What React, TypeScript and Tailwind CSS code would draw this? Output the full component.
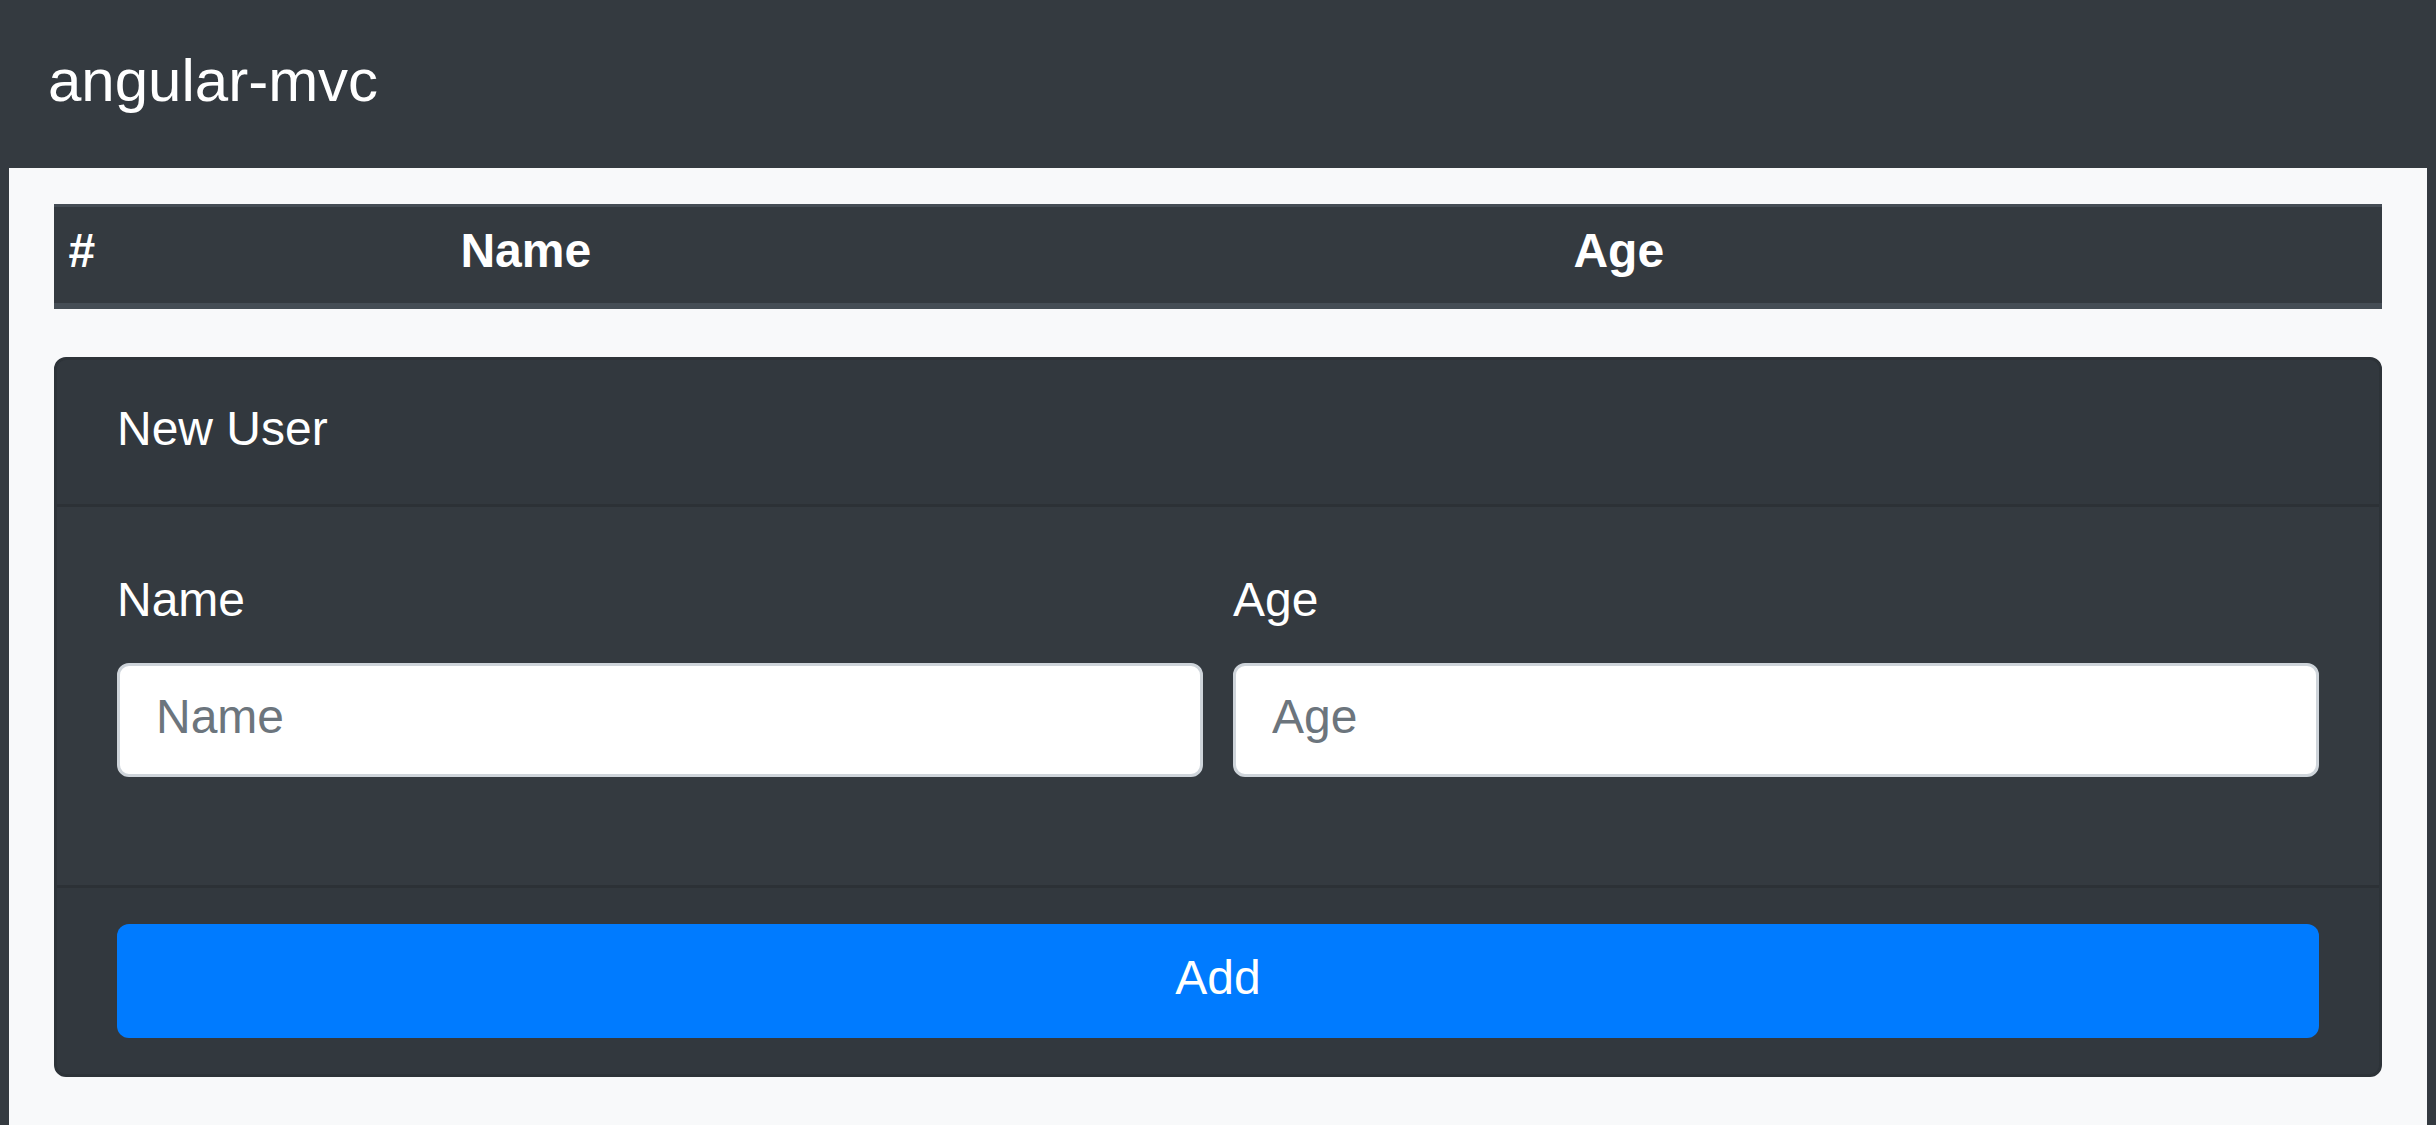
import React from "react";

const font = { fontFamily: '"Liberation Sans", Arial, sans-serif' };

function UsersTable() {
	return (
		<table className="w-full border-collapse mb-[48px]">
			<thead className="bg-[#343a40] text-white">
				<tr>
					<th className="w-[392px] text-left align-bottom font-bold text-[48px] leading-[72px] px-[14.4px] pt-[8px] pb-[16px] border-t-[3px] border-b-[6px] border-[#454d55]">
						#
					</th>
					<th className="w-[1113px] text-left align-bottom font-bold text-[48px] leading-[72px] px-[14.4px] pt-[8px] pb-[16px] border-t-[3px] border-b-[6px] border-[#454d55]">
						Name
					</th>
					<th className="text-left align-bottom font-bold text-[48px] leading-[72px] px-[14.4px] pt-[8px] pb-[16px] border-t-[3px] border-b-[6px] border-[#454d55]">
						Age
					</th>
				</tr>
			</thead>
			<tbody></tbody>
		</table>
	);
}

function Field({ label }: { label: string }) {
	return (
		<div className="flex-1 mb-[48px]">
			<label className="block text-white text-[48px] leading-[66px] mb-[30px]">{label}</label>
			<input
				placeholder={label}
				className="block w-full h-[114px] bg-white border-[3px] border-[#ced4da] rounded-[12px] px-[36px] pt-[14px] pb-[22px] text-[48px] leading-[72px] text-[#495057] placeholder:text-[#6c757d] outline-none"
			/>
		</div>
	);
}

function NewUserCard() {
	return (
		<div className="bg-[#343a40] border-[3px] border-[#2d3338] rounded-[12px] overflow-hidden">
			{/* Card header */}
			<div className="bg-[#32383e] border-b-[3px] border-[#2c3136] px-[60px] pt-[33px] pb-[39px] text-white text-[48px] leading-[72px]">
				New User
			</div>

			{/* Card body */}
			<div className="p-[60px]">
				<div className="flex gap-[30px]">
					<Field label="Name" />
					<Field label="Age" />
				</div>
			</div>

			{/* Card footer */}
			<div className="bg-[#32383e] border-t-[3px] border-[#2c3136] px-[60px] py-[36px]">
				<button className="block w-full h-[114px] pb-[6px] bg-[#007bff] rounded-[12px] text-white text-[48px] leading-[72px]">
					Add
				</button>
			</div>
		</div>
	);
}

export default function App() {
	return (
		<div className="min-h-screen bg-[#343a40]" style={font}>
			<nav className="flex items-center h-[168px] px-[48px] pb-[6px]">
				<span className="text-white text-[60px] leading-[90px]">angular-mvc</span>
			</nav>
			<main className="mx-[9px] bg-[#f8f9fa] px-[45px] pt-[36px] pb-[48px]">
				<UsersTable />
				<NewUserCard />
			</main>
		</div>
	);
}
